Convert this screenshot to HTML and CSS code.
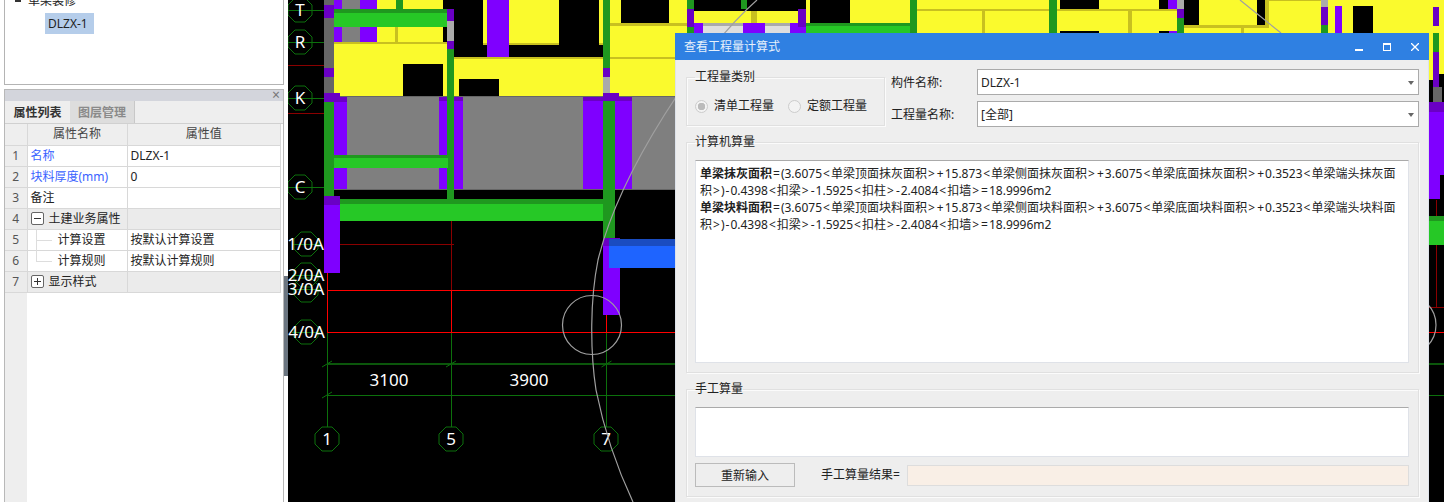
FILE: index.html
```html
<!DOCTYPE html>
<html lang="zh-CN">
<head>
	<meta charset="UTF-8">
	<title>查看工程量计算式</title>
	<link rel="stylesheet" href="styles.css">
</head>
<body>
	<div class="side">
		<div class="side-main">
			<div class="tree">
				<div class="tree-row tree-parent"><i class="tree-mark"></i>单梁装修</div>
				<div class="tree-row tree-leaf"><span class="selected">DLZX-1</span></div>
			</div>
			<div class="props">
				<div class="props-bar"><span class="props-close">×</span></div>
				<div class="tabs">
					<span class="tab current">属性列表</span>
					<span class="tab">图层管理</span>
				</div>
				<div class="props-body">
					<table class="grid">
						<colgroup>
							<col class="col-num">
							<col class="col-name">
							<col class="col-value">
						</colgroup>
						<tr class="head">
							<th></th>
							<th>属性名称</th>
							<th>属性值</th>
						</tr>
						<tr>
							<td class="num">1</td>
							<td class="link">名称</td>
							<td>DLZX-1</td>
						</tr>
						<tr>
							<td class="num">2</td>
							<td class="link">块料厚度(mm)</td>
							<td>0</td>
						</tr>
						<tr>
							<td class="num">3</td>
							<td>备注</td>
							<td></td>
						</tr>
						<tr class="section">
							<td class="num">4</td>
							<td><i class="fold fold-open"></i>土建业务属性</td>
							<td></td>
						</tr>
						<tr>
							<td class="num">5</td>
							<td class="sub sub-mid">计算设置</td>
							<td>按默认计算设置</td>
						</tr>
						<tr>
							<td class="num">6</td>
							<td class="sub sub-end">计算规则</td>
							<td>按默认计算规则</td>
						</tr>
						<tr class="section">
							<td class="num">7</td>
							<td><i class="fold"></i>显示样式</td>
							<td></td>
						</tr>
					</table>
				</div>
			</div>
		</div>
		<div class="splitter"><div class="splitter-handle"></div></div>
	</div>

	<div class="canvas">
		<svg class="drawing" viewBox="288 0 1156 502" width="1156" height="502">
			<defs>
				<polygon id="oct" points="-5,-12 5,-12 12,-5 12,5 5,12 -5,12 -12,5 -12,-5"></polygon>
			</defs>

			<!-- 灰色楼板 -->
			<path class="c-gray" d="M334 96H675V189H334zM342 0H360V9H342zM342 27H360V42H342z"></path>
			<path class="c-edge" d="M334 96H675V97H334zM334 189H675V190H334zM324 0H334V5H324zM324 18H334V68H324zM324 77H334V93H324zM1433 87H1442V102H1433z"></path>
			<path class="c-silver" d="M447 21H454V41H447zM603 77H610V93H603zM1177 0H1184V9H1177zM1321 0H1328V7H1321zM1433 0H1439V7H1433zM703 23H743V26H703zM765 23H790V26H765z"></path>
			<path class="c-pale" d="M703 26H743V33H703zM765 26H790V33H765z"></path>

			<!-- 黄色墙面 -->
			<path class="c-yellow" d="M377 0H396V9H377zM403 0H443V9H403zM377 27H443V42H377zM334 44H447V96H334zM454 59H603V96H454zM483 0H487V44H483zM509 0H559V44H509zM599 0H603V44H599zM610 0H687V33H675V96H610zM694 11H798V23H694zM806 0H910V23H806zM917 0H1049V33H917zM1057 0H1177V33H1057zM1184 0H1321V33H1184zM1328 0H1444V33H1328zM1429 33H1433V80H1429zM1439 33H1444V74H1439z"></path>
			<path class="c-black" d="M403 64H443V96H403zM459 79H499V96H459zM621 0H669V23H621zM810 0H850V23H810zM1060 0H1099V9H1060zM1060 31H1099V33H1060zM1159 0H1168V9H1159zM1159 31H1169V33H1159zM1184 0H1199V25H1184zM1257 0H1265V25H1257zM1353 6H1373V33H1353z"></path>
			<path class="c-olive" d="M334 42H447V44H334zM454 57H603V59H454zM483 43H559V45H483zM599 43H603V45H599zM395 13H398V43H395zM610 23H687V26H610zM610 57H675V59H610zM751 11H757V23H751zM917 9H1049V11H917zM1057 9H1177V11H1057zM982 11H985V33H982zM1128 11H1132V33H1128zM1184 25H1269V28H1184zM1265 0H1269V28H1265zM1269 0H1321V1H1269zM1241 28H1244V33H1241z"></path>

			<!-- 紫色柱 -->
			<path class="c-purple" d="M334 0H342V9H334zM360 0H377V9H360zM334 27H342V42H334zM360 27H377V42H360zM487 0H509V57H487zM334 101H347V189H334zM439 101H447V189H439zM454 101H463V189H454zM583 101H603V189H583zM615 101H632V189H615zM324 205H340V273H324zM603 246H620V315H603zM694 23H703V33H694zM743 23H765V33H743zM790 23H806V33H790zM1168 0H1177V9H1168zM1169 31H1177V33H1169zM1335 6H1342V33H1335zM1429 110H1444V175H1429zM1429 175H1440V199H1429z"></path>
			<path class="c-violet" d="M324 5H334V18H324zM324 68H334V77H324zM324 93H340V102H324zM334 97H347V102H334zM439 97H463V101H439zM447 9H454V21H447zM447 41H454V49H447zM583 97H603V101H583zM603 68H610V77H603zM603 93H619V101H603zM619 97H632V101H619zM324 196H340V205H324zM603 238H620V246H603zM687 9H694V27H687zM798 9H806V27H798zM1177 9H1184V18H1177zM1321 7H1328V25H1321zM1433 7H1439V26H1433zM1433 52H1439V87H1433zM1429 102H1444V112H1429z"></path>

			<!-- 绿色梁 -->
			<path class="c-forest" d="M324 102H334V196H324zM334 9H447V13H334zM396 0H403V9H396zM447 49H454V200H447zM334 155H448V158H334zM340 199H603V204H340zM603 0H610V68H603zM603 101H615V238H603zM687 0H694V9H687zM687 27H694V33H687zM741 0H747V9H741zM910 0H917V33H910zM806 23H910V26H806zM1049 0H1057V33H1049zM1177 18H1184V33H1177zM1321 25H1328V33H1321zM1433 33H1439V52H1433zM1429 216H1444V221H1429z"></path>
			<path class="c-lime" d="M334 13H447V27H334zM334 158H448V168H334zM340 204H603V221H340zM806 26H910V33H806zM1429 221H1444V245H1429z"></path>
			<path class="c-blue" d="M609 246H675V268H609z"></path>
			<path class="c-navy" d="M609 239H675V246H609z"></path>

			<!-- 轴线 -->
			<path class="axis-dim" d="M288 65.5H324M288 113.5H324M340 244.5H454M451.5 221V290M1436.5 200V216M1436.5 245V307M1429 307.5H1444"></path>
			<path class="axis-red" d="M327.5 273V332M327 290.5H603M327 332.5H1444M451.5 290V332M606.5 315V332"></path>
			<path class="axis-green" d="M288 10.5H324M288 42.5H324M288 98.5H324M288 187.5H324M292 244.5H320M292 275.5H320M292 289.5H320M292 332.5H320M327.5 333V427M451.5 333V427M606.5 333V427M327 395.5H1444"></path>
			<path class="axis-thick" d="M327 364H1444"></path>
			<path class="axis-tick" d="M322 367L332 361M446 367L456 361M601.5 367L611.5 361M322 398L332 392"></path>

			<use class="bubble" href="#oct" x="300" y="10"></use>
			<use class="bubble" href="#oct" x="300" y="42"></use>
			<use class="bubble" href="#oct" x="300" y="98"></use>
			<use class="bubble" href="#oct" x="300" y="187"></use>
			<use class="bubble" href="#oct" x="306" y="244"></use>
			<use class="bubble" href="#oct" x="306" y="275"></use>
			<use class="bubble" href="#oct" x="306" y="290"></use>
			<use class="bubble" href="#oct" x="306" y="332"></use>
			<use class="bubble" href="#oct" x="327" y="439"></use>
			<use class="bubble" href="#oct" x="451" y="439"></use>
			<use class="bubble" href="#oct" x="606" y="439"></use>

			<text class="label" x="300" y="16">T</text>
			<text class="label" x="300" y="48">R</text>
			<text class="label" x="300" y="104">K</text>
			<text class="label" x="300" y="193">C</text>
			<text class="label" x="305.5" y="250">1/0A</text>
			<text class="label" x="306" y="281">2/0A</text>
			<text class="label" x="306" y="295">3/0A</text>
			<text class="label" x="306.5" y="338">4/0A</text>
			<text class="label" x="389" y="386">3100</text>
			<text class="label" x="529" y="386">3900</text>
			<text class="label" x="327" y="445">1</text>
			<text class="label" x="451" y="445">5</text>
			<text class="label" x="606" y="445">7</text>

			<!-- 灰色圆弧 -->
			<path class="arc" d="M757 0C700 50 620 170 598 260C590 300 590 350 596 390C604 430 618 470 633 502M1240 0L1281 33"></path>
			<circle class="arc" cx="592" cy="325" r="29.5"></circle>
			<circle class="arc" cx="1406" cy="325" r="30"></circle>
		</svg>

		<div class="dialog">
			<div class="dialog-title">
				<span class="dialog-name">查看工程量计算式</span>
				<div class="dialog-btns">
					<svg width="8" height="8" viewBox="0 0 8 8"><path class="win-icon" d="M0 6H8V8H0z"></path></svg>
					<svg width="8" height="8" viewBox="0 0 8 8"><path class="win-icon" d="M0 0H8V8H0zM1 2V7H7V2z" fill-rule="evenodd"></path></svg>
					<svg width="8" height="8" viewBox="0 0 8 8"><path class="win-line" d="M0 0L8 8M8 0L0 8"></path></svg>
				</div>
			</div>
			<div class="dialog-body">
				<div class="top-row">
					<fieldset class="group group-type">
						<legend>工程量类别</legend>
						<div class="radios">
							<i class="radio checked"></i><span>清单工程量</span>
							<i class="radio"></i><span>定额工程量</span>
						</div>
					</fieldset>
					<div class="form">
						<span class="form-label">构件名称:</span>
						<div class="combo">DLZX-1</div>
						<span class="form-label">工程量名称:</span>
						<div class="combo">[全部]</div>
					</div>
				</div>

				<fieldset class="group group-calc">
					<legend>计算机算量</legend>
					<div class="formula">
						<p><b>单梁抹灰面积</b><i>=</i>(3.6075<i>&lt;</i>单梁顶面抹灰面积<i>&gt;</i><i>+</i>15.873<i>&lt;</i>单梁侧面抹灰面积<i>&gt;</i><i>+</i>3.6075<i>&lt;</i>单梁底面抹灰面积<i>&gt;</i><i>+</i>0.3523<i>&lt;</i>单梁端头抹灰面<br>积<i>&gt;</i>)<i>-</i>0.4398<i>&lt;</i>扣梁<i>&gt;</i><i>-</i>1.5925<i>&lt;</i>扣柱<i>&gt;</i><i>-</i>2.4084<i>&lt;</i>扣墙<i>&gt;</i><i>=</i>18.9996m2</p>
						<p><b>单梁块料面积</b><i>=</i>(3.6075<i>&lt;</i>单梁顶面块料面积<i>&gt;</i><i>+</i>15.873<i>&lt;</i>单梁侧面块料面积<i>&gt;</i><i>+</i>3.6075<i>&lt;</i>单梁底面块料面积<i>&gt;</i><i>+</i>0.3523<i>&lt;</i>单梁端头块料面<br>积<i>&gt;</i>)<i>-</i>0.4398<i>&lt;</i>扣梁<i>&gt;</i><i>-</i>1.5925<i>&lt;</i>扣柱<i>&gt;</i><i>-</i>2.4084<i>&lt;</i>扣墙<i>&gt;</i><i>=</i>18.9996m2</p>
					</div>
				</fieldset>

				<fieldset class="group group-manual">
					<legend>手工算量</legend>
					<div class="manual-input"></div>
					<div class="manual-row">
						<div class="btn">重新输入</div>
						<span class="manual-label">手工算量结果=</span>
						<div class="manual-result"></div>
					</div>
				</fieldset>
			</div>
		</div>
	</div>
</body>
</html>
```

FILE: styles.css
```css
html, body, div, p, table, th, td, fieldset, legend {
	margin: 0;
	padding: 0;
}
html, body {
	height: 502px;
	overflow: hidden;
}
body {
	display: flex;
	font: 12px/16px "Noto Sans", "Noto Sans CJK SC", sans-serif;
	color: #222;
	background: #fff;
}
i {
	font-style: normal;
}

/* 左侧面板 */
.side {
	display: flex;
	flex: none;
	width: 288px;
	height: 502px;
	background: #fff;
}
.side-main {
	flex: none;
	width: 284px;
	padding-left: 4px;
	box-sizing: border-box;
}
.splitter {
	flex: none;
	width: 4px;
	padding-top: 276px;
	box-sizing: border-box;
	background: #fff;
}
.splitter-handle {
	height: 100px;
	background: #6b7580;
}
.tree {
	height: 85px;
	box-sizing: border-box;
	background: #fff;
	border: 1px solid #b4b4b4;
	border-top: 0;
	overflow: hidden;
}
.tree-row {
	height: 21px;
	line-height: 21px;
	white-space: nowrap;
}
.tree-parent {
	margin-top: -10px;
	padding-left: 10px;
}
.tree-mark {
	display: inline-block;
	width: 6px;
	height: 5px;
	margin-right: 7px;
	background: #333;
	vertical-align: 3px;
}
.tree-leaf {
	margin-top: 2px;
	padding-left: 40px;
}
.selected {
	display: inline-block;
	width: 49px;
	padding-left: 3px;
	box-sizing: border-box;
	background: #b5cdea;
}
.props {
	height: 413px;
	margin-top: 4px;
	box-sizing: border-box;
	background: #fff;
	border: 1px solid #b8b8b8;
	border-bottom: 0;
}
.props-bar {
	display: flex;
	justify-content: flex-end;
	height: 11px;
	padding-right: 3px;
	line-height: 10px;
	font-size: 14px;
	color: #777;
	background: #d3d5dc;
}
.tabs {
	display: flex;
	height: 23px;
	box-sizing: border-box;
	background: #eee;
	border-bottom: 1px solid #d0d0d0;
}
.tab {
	width: 65px;
	height: 22px;
	line-height: 23px;
	text-align: center;
	color: #8a8a8a;
	font-weight: 700;
	background: #ddd;
	border-right: 1px solid #c8c8c8;
	box-sizing: border-box;
}
.tab.current {
	color: #333;
	background: #eee;
	border-right: 0;
}
.props-body {
	height: 378px;
	background: linear-gradient(90deg, #eee 22px, #fff 22px);
}
.grid {
	width: 276px;
	table-layout: fixed;
	border-collapse: collapse;
}
.col-num {
	width: 22px;
}
.col-name {
	width: 100px;
}
.grid th, .grid td {
	height: 21px;
	padding: 0 0 0 3px;
	box-sizing: border-box;
	font-weight: 400;
	white-space: nowrap;
	background: #fff;
	border: 1px solid #d8d8d8;
	border-width: 0 1px 1px 0;
}
.grid .head th {
	text-align: center;
	padding: 0;
	color: #444;
	background: #eee;
}
.grid .num {
	padding: 0;
	text-align: center;
	color: #555;
	background: #eee;
}
.grid .link {
	color: #3a63ff;
}
.grid .section td {
	background: #ebebeb;
}
.fold {
	position: relative;
	display: inline-block;
	width: 13px;
	height: 13px;
	margin-right: 5px;
	box-sizing: border-box;
	background: #fff;
	border: 1px solid #666;
	border-radius: 2px;
	vertical-align: -2px;
}
.fold::before, .fold::after {
	content: "";
	position: absolute;
	background: #333;
}
.fold::before {
	left: 2px;
	top: 5px;
	width: 7px;
	height: 1px;
}
.fold::after {
	left: 5px;
	top: 2px;
	width: 1px;
	height: 7px;
}
.fold-open::after {
	display: none;
}
.grid .sub {
	position: relative;
	padding-left: 30px;
}
.sub::before {
	content: "";
	position: absolute;
	left: 8px;
	top: 10px;
	width: 16px;
	height: 1px;
	background: #ddd;
}
.sub::after {
	content: "";
	position: absolute;
	left: 8px;
	top: 0;
	width: 1px;
	background: #ddd;
}
.sub-mid::after {
	height: 21px;
}
.sub-end::after {
	height: 11px;
}

/* 绘图区 */
.canvas {
	position: relative;
	flex: 1;
	height: 502px;
	background: #000;
	overflow: hidden;
}
.drawing {
	display: block;
}
.c-gray { fill: #7f7f7f; }
.c-edge { fill: #666; }
.c-silver { fill: #aaa; }
.c-pale { fill: #dedede; }
.c-yellow { fill: #fafa2d; }
.c-black { fill: #000; }
.c-olive { fill: #c8c020; }
.c-purple { fill: #7f00ff; }
.c-violet { fill: #6a00c4; }
.c-forest { fill: #1f981f; }
.c-lime { fill: #26c826; }
.c-blue { fill: #1e64ff; }
.c-navy { fill: #1a4cc0; }
.axis-dim, .axis-red, .axis-green, .axis-thick, .axis-tick, .arc, .bubble {
	fill: none;
}
.axis-dim { stroke: #8a0000; }
.axis-red { stroke: #f00; }
.axis-green { stroke: #0c700c; }
.axis-thick { stroke: #0b560b; stroke-width: 2; }
.axis-tick { stroke: #0c700c; }
.arc { stroke: #a0a0a0; stroke-width: 1.2; }
.bubble { stroke: #0c700c; }
.label {
	font: 17px "Noto Sans", sans-serif;
	fill: #fff;
	text-anchor: middle;
}

/* 对话框 */
.dialog {
	position: absolute;
	left: 387px;
	top: 33px;
	display: flex;
	flex-direction: column;
	width: 754px;
	height: 469px;
	box-sizing: border-box;
	background: #eee;
	border: solid #dde2ea;
	border-width: 0 1px;
}
.dialog-title {
	display: flex;
	flex: none;
	align-items: center;
	justify-content: space-between;
	height: 27px;
	margin: 0 -1px;
	padding: 0 10px 0 9px;
	color: #e6f0fb;
	background: #2f80e2;
}
.dialog-btns {
	display: flex;
	gap: 20px;
}
.win-icon {
	fill: #fff;
}
.win-line {
	fill: none;
	stroke: #fff;
	stroke-width: 1.3;
}
.dialog-body {
	padding: 9px 9px 0 10px;
}
.top-row {
	display: flex;
}
.group {
	min-width: 0;
	box-sizing: border-box;
	border: 1px solid #e0e0e0;
	box-shadow: 1px 1px 0 #fbfbfb, inset 1px 1px 0 #fbfbfb;
}
.group legend {
	line-height: 16px;
}
.group-type {
	flex: none;
	width: 199px;
	height: 57px;
	padding: 12px 8px 0;
}
.radios {
	display: flex;
	align-items: center;
	height: 18px;
	white-space: nowrap;
}
.radio {
	flex: none;
	width: 13px;
	height: 13px;
	margin-right: 6px;
	box-sizing: border-box;
	background: #f3f3f3;
	border: 1px solid #ccc;
	border-radius: 50%;
}
.radio.checked {
	background: radial-gradient(circle, #bbb 0 3.5px, #f3f3f3 4px);
}
.radios span {
	flex: none;
	margin-right: 14px;
}
.form {
	display: grid;
	flex: 1;
	grid-template-columns: 86px 1fr;
	grid-auto-rows: 26px;
	row-gap: 6px;
	align-items: center;
	margin-left: 6px;
}
.form-label {
	padding-top: 2px;
}
.combo {
	position: relative;
	height: 26px;
	padding-left: 3px;
	box-sizing: border-box;
	line-height: 26px;
	background: #fff;
	border: 1px solid #aaa;
}
.combo::after {
	content: "";
	position: absolute;
	right: 4px;
	top: 11px;
	border: 3px solid transparent;
	border-top: 4px solid #666;
}
.group-calc {
	height: 239px;
	margin-top: 7px;
	padding: 10px 9px 0 8px;
}
.formula {
	height: 203px;
	padding: 4px;
	box-sizing: border-box;
	line-height: 17px;
	white-space: nowrap;
	background: #fff;
	border: 1px solid #dfe2e8;
	border-top-color: #aaa;
}
.formula i {
	padding: 0 1px;
}
.group-manual {
	height: 116px;
	margin-top: 8px;
	padding: 10px 9px 0 8px;
}
.manual-input {
	height: 50px;
	box-sizing: border-box;
	background: #fff;
	border: 1px solid #dfe2e8;
	border-top-color: #aaa;
}
.manual-row {
	display: flex;
	align-items: center;
	margin-top: 6px;
}
.btn {
	flex: none;
	width: 100px;
	height: 24px;
	box-sizing: border-box;
	line-height: 24px;
	text-align: center;
	border: 1px solid #bbb;
}
.manual-label {
	flex: none;
	margin-left: 26px;
}
.manual-result {
	flex: 1;
	height: 21px;
	margin-left: 7px;
	box-sizing: border-box;
	background: #f9efe6;
	border: 1px solid #ddd;
}
```
